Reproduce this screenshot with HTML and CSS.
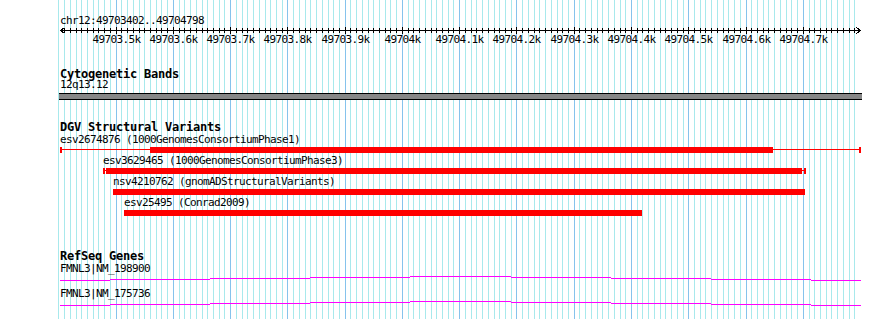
FILE: index.html
```html
<!DOCTYPE html>
<html lang="en">
<head>
    <meta charset="UTF-8">
    <title>chr12:49703402..49704798</title>
    <link rel="stylesheet" href="styles.css">
</head>
<body>

    <div class="panel">
        <!-- vertical grid behind the tracks -->
        <div class="grid" id="grid"></div>

        <!-- ruler -->
        <div class="ruler">
            <div class="ruler-label">chr12:49703402..49704798</div>
            <svg class="axis" id="axis" width="802" height="7"></svg>
            <div class="tick-labels" id="tickLabels"></div>
        </div>

        <div class="track cytoband">
            <div class="track-title">Cytogenetic Bands</div>
            <div class="feature-label band-label">12q13.12</div>
            <div class="band"></div>
        </div>

        <div class="track dgv">
            <div class="track-title">DGV Structural Variants</div>
            <div class="features" id="dgvFeatures"></div>
        </div>

        <div class="track refseq">
            <div class="track-title">RefSeq Genes</div>
            <div class="features" id="genes"></div>
        </div>
    </div>

    <script>
        const view = { start: 49703402, end: 49704798, left: 60, width: 800 };
        const scale = view.width / (view.end - view.start + 1);
        const NS = 'http://www.w3.org/2000/svg';

        function px(pos) {
            return Math.floor(view.left + (pos - view.start) * scale);
        }

        function svgEl(name, attrs) {
            const el = document.createElementNS(NS, name);
            for (const key in attrs) el.setAttribute(key, attrs[key]);
            return el;
        }

        // grid lines every 10bp, darker every 100bp
        const grid = document.getElementById('grid');
        for (let b = 49703400; b <= 49704790; b += 10) {
            const line = document.createElement('div');
            line.className = 'grid-line' + (b % 100 === 0 && b > view.start ? ' major' : '');
            line.style.left = px(b) + 'px';
            grid.appendChild(line);
        }

        // ruler axis
        const axis = document.getElementById('axis');
        const right = view.width + 0.5;
        axis.appendChild(svgEl('line', { x1: 0.5, y1: 3.5, x2: right, y2: 3.5 }));
        axis.appendChild(svgEl('polyline', { points: '4.5,0.5 0.5,3.5 4.5,6.5' }));
        axis.appendChild(svgEl('polyline', { points: `${right - 4},0.5 ${right},3.5 ${right - 4},6.5` }));

        const tickLabels = document.getElementById('tickLabels');
        for (let b = 49703410; b <= 49704790; b += 10) {
            const x = px(b) - view.left + 0.5;
            const major = b % 100 === 0;
            axis.appendChild(svgEl('line', { x1: x, y1: major ? 0 : 1, x2: x, y2: major ? 7 : 6 }));
            if (major) {
                const label = document.createElement('div');
                label.className = 'tick-label';
                label.textContent = (b / 1000) + 'k';
                label.style.left = x + 'px';
                tickLabels.appendChild(label);
            }
        }

        // DGV structural variants
        const variants = [
            { name: 'esv2674876', source: '1000GenomesConsortiumPhase1', start: 49703402, end: 49704800, thickStart: 49703560, thickEnd: 49704647 },
            { name: 'esv3629465', source: '1000GenomesConsortiumPhase3', start: 49703478, end: 49704704, thickStart: 49703483, thickEnd: 49704697 },
            { name: 'nsv4210762', source: 'gnomADStructuralVariants', start: 49703495, end: 49704702 },
            { name: 'esv25495', source: 'Conrad2009', start: 49703514, end: 49704418 }
        ];

        const dgv = document.getElementById('dgvFeatures');
        variants.forEach(v => {
            const left = px(v.start);
            const width = px(v.end + 1) - left;
            const thickLeft = px(v.thickStart || v.start) - left;
            const thickWidth = px((v.thickEnd || v.end) + 1) - left - thickLeft;

            const row = document.createElement('div');
            row.className = 'feature';
            row.style.marginLeft = (left - view.left) + 'px';
            row.innerHTML = `
                <div class="feature-label">${v.name} (${v.source})</div>
                <div class="feature-bar" style="width: ${width}px">
                    <span class="thin"></span>
                    <span class="cap cap-start"></span>
                    <span class="cap cap-end"></span>
                    <span class="thick" style="left: ${thickLeft}px; width: ${thickWidth}px"></span>
                </div>`;
            dgv.appendChild(row);
        });

        // RefSeq genes: only an intron spans the view, drawn as a hat
        const genes = ['FMNL3|NM_198900', 'FMNL3|NM_175736'];

        function hatPath(x1, x2, h) {
            const mid = (x1 + x2) / 2;
            const half = (x2 - x1) / 2;
            const steps = [];
            for (let k = 0; k < h; k++) steps.push(half * (1 - (k + 0.5) / h));
            const xs = [x1,
                ...steps.map(s => Math.round(mid - s)),
                ...steps.slice().reverse().map(s => Math.round(mid + s)),
                x2];
            let d = '';
            for (let i = 0; i <= 2 * h; i++) {
                const level = h - Math.abs(h - i);
                d += `M${xs[i]} ${h + 1.5 - level}H${xs[i + 1]}`;
            }
            return d;
        }

        const geneBox = document.getElementById('genes');
        genes.forEach(name => {
            const row = document.createElement('div');
            row.className = 'gene';
            const label = document.createElement('div');
            label.className = 'feature-label';
            label.textContent = name;
            const svg = svgEl('svg', { class: 'gene-line', width: 802, height: 8 });
            svg.appendChild(svgEl('path', { d: hatPath(0, 801, 4) }));
            row.appendChild(label);
            row.appendChild(svg);
            geneBox.appendChild(row);
        });
    </script>

</body>
</html>
```

FILE: styles.css
```css
body {
    margin: 0;
    background-color: #fff;
    color: #000;
    font-family: "DejaVu Sans Mono", monospace;
}
.panel {
    position: relative;
    width: 890px;
    height: 319px;
    overflow: hidden;
    box-sizing: border-box;
    padding: 15px 0 0 60px;
}
.grid {
    position: absolute;
    top: 0;
    left: 0;
    width: 100%;
    height: 100%;
}
.grid-line {
    position: absolute;
    top: 0;
    bottom: 0;
    width: 1px;
    background-color: #a8e9ec;
}
.grid-line.major {
    background-color: #86c3ec;
}
.ruler,
.track {
    position: relative;
}
.ruler-label,
.feature-label,
.tick-label {
    font-size: 11px;
    line-height: 12px;
    letter-spacing: -0.62px;
    white-space: nowrap;
}
.axis {
    display: block;
    shape-rendering: crispEdges;
}
.axis line,
.axis polyline {
    stroke: #000;
    stroke-width: 1;
    fill: none;
}
.tick-labels {
    position: relative;
    height: 12px;
}
.tick-label {
    position: absolute;
    top: 0;
    transform: translateX(-50%);
}
.track-title {
    font-size: 12px;
    font-weight: bold;
    line-height: 12px;
    letter-spacing: -0.22px;
    white-space: nowrap;
}
.cytoband {
    margin-top: 22px;
}
.band-label {
    margin-top: -1px;
}
.band {
    margin: 2px 0 0 -1px;
    width: 803px;
    height: 5px;
    border-top: 1px solid #000;
    border-bottom: 1px solid #000;
    background-color: #878787;
}
.dgv {
    margin-top: 21px;
}
.dgv .features {
    margin-top: 1px;
}
.feature {
    margin-bottom: 2px;
}
.feature-bar {
    position: relative;
    height: 6px;
    margin-top: 1px;
}
.feature-bar span {
    position: absolute;
    background-color: #f00;
}
.feature-bar .thin {
    top: 2px;
    left: 0;
    right: 0;
    height: 1px;
}
.feature-bar .cap {
    top: 0;
    bottom: 0;
    width: 2px;
}
.feature-bar .cap-start {
    left: 0;
}
.feature-bar .cap-end {
    right: 0;
}
.feature-bar .thick {
    top: 0;
    bottom: 0;
}
.refseq {
    margin-top: 34px;
}
.refseq .features {
    margin-top: 1px;
}
.gene {
    margin-bottom: 5px;
}
.gene-line {
    display: block;
    shape-rendering: crispEdges;
}
.gene-line path {
    stroke: #f0f;
    stroke-width: 1;
    fill: none;
}
```
